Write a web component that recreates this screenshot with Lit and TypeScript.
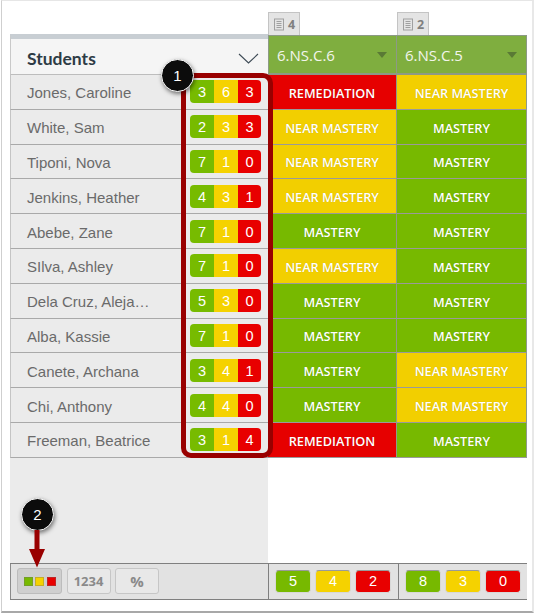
import { LitElement, html, css, svg } from "lit";
import { customElement } from "lit/decorators.js";

type Lv = "r" | "n" | "m";
const rows: [string, number, number, number, Lv, Lv][] = [
  ["Jones, Caroline", 3, 6, 3, "r", "n"],
  ["White, Sam", 2, 3, 3, "n", "m"],
  ["Tiponi, Nova", 7, 1, 0, "n", "m"],
  ["Jenkins, Heather", 4, 3, 1, "n", "m"],
  ["Abebe, Zane", 7, 1, 0, "m", "m"],
  ["SIlva, Ashley", 7, 1, 0, "n", "m"],
  ["Dela Cruz, Aleja…", 5, 3, 0, "m", "m"],
  ["Alba, Kassie", 7, 1, 0, "m", "m"],
  ["Canete, Archana", 3, 4, 1, "m", "n"],
  ["Chi, Anthony", 4, 4, 0, "m", "n"],
  ["Freeman, Beatrice", 3, 1, 4, "r", "m"],
];
const label: Record<Lv, string> = { r: "REMEDIATION", n: "NEAR MASTERY", m: "MASTERY" };

const docIcon = svg`<svg width="12" height="13" viewBox="0 0 12 13" fill="none" stroke="#a0a0a0" stroke-width="1"><rect x="1.5" y="1" width="9" height="11"/><path d="M3.5 3.5h5M3.5 5.5h5M3.5 7.5h5M3.5 9.5h5"/></svg>`;

@customElement("app-root")
export class AppRoot extends LitElement {
  static styles = css`
    :host { display: block; width: 535px; height: 615px; font-family: "Open Sans", sans-serif; background: #fff; position: relative; overflow: hidden; }
    .frame { box-sizing: border-box; width: 533px; height: 613px; margin-left: 1px; border: 1px solid #d4d4d4; border-width: 1px 2px 2px 1px; border-color: #e6e6e6 #e8e8e8 #a8a8a8 #cfcfcf; padding: 11px 5px 0 8px; display: flex; flex-direction: column; }
    .tabs { display: grid; grid-template-columns: 258px 129px 130px; height: 22px; }
    .tab { width: 32px; height: 23px; box-sizing: border-box; background: #e4e4e4; border: 1px solid #c4c4c4; border-bottom: none; display: flex; align-items: center; justify-content: center; gap: 3px; font: 700 12.5px "Open Sans", sans-serif; color: #808080; }
    .grid { display: grid; grid-template-columns: 258px 129px 130px; grid-template-rows: 41px repeat(11, 34.8px); }
    .sthead { background: #f5f5f5; border-top: 5px solid #c8ced3; border-left: 1px solid #c9c9c9; border-bottom: 1px solid #bdbdbd; box-sizing: border-box; display: flex; align-items: center; justify-content: space-between; padding: 4px 9px 0 16px; }
    .sthead b { font: 700 17.5px "Lato", sans-serif; color: #2d3b45; }
    .colhead { margin-top: 1px; background: #7fae3f; border: 1px solid #8c9a85; border-width: 1px 1px 2px 0; box-sizing: border-box; display: flex; align-items: center; justify-content: space-between; padding: 0 9px 0 8px; color: #f2f5ec; font-size: 15px; }
    .colhead:nth-child(2) { border-left: 1px solid #8c9a85; }
    .tri { width: 0; height: 0; border: 5px solid transparent; border-top: 6px solid #5a7a35; border-bottom: 0; }
    .st { background: #ebebeb; border-left: 1px solid #c4c4c4; border-bottom: 1px solid #a9a9a9; box-sizing: border-box; display: flex; align-items: center; justify-content: space-between; padding: 0 7px 0 16px; font: 15px "Liberation Sans", Arial, sans-serif; color: #6a6a6a; }
    .name { padding-top: 2px; }
    .bar { display: flex; width: 71px; height: 23px; border-radius: 4px; overflow: hidden; color: #fff; font: 14.5px "Liberation Sans", Arial, sans-serif; }
    .bar span { display: flex; align-items: center; justify-content: center; padding-top: 1px; box-sizing: border-box; }
    .bar .a { width: 24px; background: #77bb00; }
    .bar .b { width: 24px; background: #f5d200; }
    .bar .c { width: 23px; background: #e80000; }
    .cell { box-sizing: border-box; border-right: 1px solid #8f9a8a; border-bottom: 1px solid #9a9a9a; display: flex; align-items: center; justify-content: center; padding-top: 2px; color: #fff; font-size: 12.7px; font-weight: 600; text-shadow: 0 0 1px rgba(0,0,0,.2); }
    .cell.r { background: #e60000; }
    .cell.n { background: #f2cf00; }
    .cell.m { background: #77b900; }
    .fill { display: grid; grid-template-columns: 258px 1fr; height: 105px; }
    .fill div:first-child { background: #ebebeb; }
    .foot { display: grid; grid-template-columns: 258px 130px 129px; height: 37px; background: #e2e2e2; border-top: 1px solid #7f7f7f; border-bottom: 1px solid #7f7f7f; box-sizing: border-box; }
    .fc { display: flex; align-items: center; gap: 4.5px; padding: 0 6px; }
    .fc.left { border-left: 1px solid #8a8a8a; }
    .fc + .fc { border-left: 1px solid #7f7f7f; }
    .fc.score { gap: 4px; padding-left: 6px; }
    .btn { box-sizing: border-box; width: 44px; height: 26px; border: 1px solid #c6c6c6; border-radius: 3px; background: #e8e8e8; display: flex; align-items: center; justify-content: center; color: #8a8a8a; font: 700 13px "Open Sans", sans-serif; gap: 2.5px; }
    .btn.on { width: 45px; background: #cfcfcf; border-color: #bcbcbc; }
    .btn.p { font-size: 15px; }
    .sq { width: 9px; height: 9px; box-sizing: border-box; border: 1px solid rgba(110,110,110,.35); }
    .pill { width: 36px; height: 23px; border-radius: 4px; color: #fff; font: 14.5px "Liberation Sans", Arial, sans-serif; display: flex; align-items: center; justify-content: center; box-sizing: border-box; border: 1px solid #d8d8d8; border-top-color: #9a9a9a; }
    .pill.a { background: #77b900; }
    .pill.b { background: #f5d200; }
    .pill.c { background: #e80000; }
    .ring { position: absolute; left: 181px; top: 73px; width: 92px; height: 385px; box-sizing: border-box; border: 5px solid #990000; border-radius: 10px; }
    .badge { position: absolute; width: 33px; height: 33px; border-radius: 50%; background: #0c0c0c; border: 1px solid #fff; box-sizing: border-box; box-shadow: 1px 2px 4px rgba(0,0,0,.5); color: #fff; font: 15px "Liberation Sans", Arial, sans-serif; display: flex; align-items: center; justify-content: center; }
    .b1 { left: 161px; top: 59px; }
    .b2 { left: 21px; top: 498px; }
    .arrow { position: absolute; left: 29px; top: 530px; }
  `;

  render() {
    return html`
      <div class="frame">
        <div class="tabs">
          <div></div>
          <div><div class="tab">${docIcon}4</div></div>
          <div><div class="tab">${docIcon}2</div></div>
        </div>
        <div class="grid">
          <div class="sthead"><b>Students</b>
            <svg width="21" height="12" viewBox="0 0 21 12" fill="none" stroke="#3d4a55" stroke-width="1.1"><path d="M1 1l9.5 9 9.5-9"/></svg>
          </div>
          <div class="colhead">6.NS.C.6<i class="tri"></i></div>
          <div class="colhead">6.NS.C.5<i class="tri"></i></div>
          ${rows.map((r) => html`
            <div class="st"><span class="name">${r[0]}</span>
              <div class="bar"><span class="a">${r[1]}</span><span class="b">${r[2]}</span><span class="c">${r[3]}</span></div>
            </div>
            <div class="cell ${r[4]}">${label[r[4]]}</div>
            <div class="cell ${r[5]}">${label[r[5]]}</div>
          `)}
        </div>
        <div class="fill"><div></div><div></div></div>
        <div class="foot">
          <div class="fc left">
            <div class="btn on"><i class="sq" style="background:#77b900"></i><i class="sq" style="background:#f5d200"></i><i class="sq" style="background:#e80000"></i></div>
            <div class="btn n">1234</div>
            <div class="btn p">%</div>
          </div>
          <div class="fc score"><div class="pill a">5</div><div class="pill b">4</div><div class="pill c">2</div></div>
          <div class="fc score"><div class="pill a">8</div><div class="pill b">3</div><div class="pill c">0</div></div>
        </div>
      </div>
      <div class="ring"></div>
      <div class="badge b1">1</div>
      <div class="badge b2">2</div>
      <svg class="arrow" width="16" height="38" viewBox="0 0 16 38"><path d="M5.5 0h5v19H16L8 37.500 0 19h5.500z" fill="#990000"/></svg>
    `;
  }
}
